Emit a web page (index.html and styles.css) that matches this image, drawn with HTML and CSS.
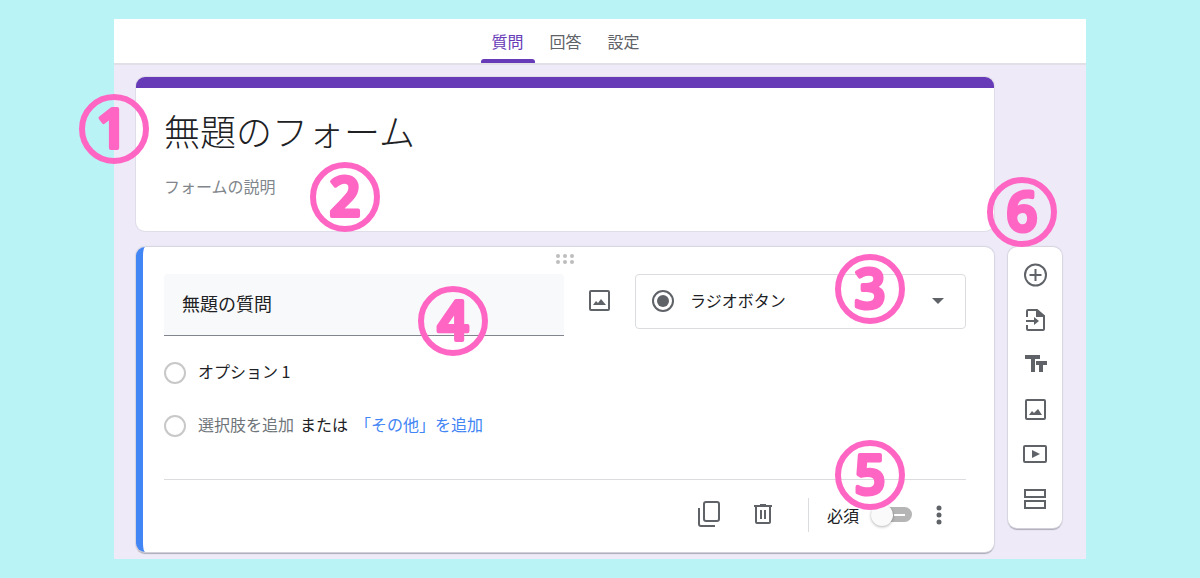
FILE: index.html
```html
<!DOCTYPE html>
<html lang="ja">

<head>
    <title>無題のフォーム</title>
    <meta charset="utf-8">
    <link rel="stylesheet" href="styles.css">
</head>

<body>
    <main class="editor">
        <nav class="tabs">
            <a class="tab active" href="#questions">質問</a>
            <a class="tab" href="#responses">回答</a>
            <a class="tab" href="#settings">設定</a>
        </nav>

        <div class="canvas" id="questions">
            <section class="card title-card">
                <input class="form-title" type="text" value="無題のフォーム" aria-label="フォームのタイトル">
                <input class="form-description" type="text" placeholder="フォームの説明" aria-label="フォームの説明">
                <svg class="marker marker-title" viewBox="0 0 72 72">
                    <circle cx="36" cy="36" r="32" />
                    <text x="34" y="55">1</text>
                </svg>
                <svg class="marker marker-description" viewBox="0 0 72 72">
                    <circle cx="36" cy="36" r="32" />
                    <text x="36" y="55">2</text>
                </svg>
            </section>

            <section class="card question-card">
                <div class="handle">
                    <svg width="18" height="10" viewBox="0 0 18 10">
                        <circle cx="2" cy="2" r="2" />
                        <circle cx="9" cy="2" r="2" />
                        <circle cx="16" cy="2" r="2" />
                        <circle cx="2" cy="8" r="2" />
                        <circle cx="9" cy="8" r="2" />
                        <circle cx="16" cy="8" r="2" />
                    </svg>
                </div>

                <div class="question-head">
                    <div class="question-field">
                        <input class="question-text" type="text" value="無題の質問" aria-label="質問">
                        <svg class="marker marker-question" viewBox="0 0 72 72">
                            <circle cx="36" cy="36" r="32" />
                            <text x="36" y="55">4</text>
                        </svg>
                    </div>
                    <button class="icon-button add-image" type="button" aria-label="画像を追加">
                        <svg class="icon" viewBox="0 0 24 24">
                            <rect class="line" x="2" y="2" width="19" height="19" rx="1" />
                            <path d="M5 16l3-4 2 2 3-4 5 6z" />
                        </svg>
                    </button>
                    <div class="type-picker">
                        <svg class="icon type-icon" viewBox="0 0 24 24">
                            <circle class="line" cx="12" cy="12" r="10" />
                            <circle cx="12" cy="12" r="6" />
                        </svg>
                        <select class="type-select" aria-label="質問の形式">
                            <option>ラジオボタン</option>
                        </select>
                        <svg class="type-arrow" width="12" height="6" viewBox="0 0 12 6">
                            <path d="M0 0h12L6 6z" />
                        </svg>
                        <svg class="marker marker-type" viewBox="0 0 72 72">
                            <circle cx="36" cy="36" r="32" />
                            <text x="36" y="55">3</text>
                        </svg>
                    </div>
                </div>

                <div class="options">
                    <div class="option">
                        <input class="radio" type="radio" name="option" id="option-1">
                        <label class="option-text" for="option-1">オプション 1</label>
                    </div>
                    <div class="option">
                        <input class="radio" type="radio" name="option" id="option-add">
                        <label class="option-text muted" for="option-add">選択肢を追加</label>
                        <span class="option-text or">または</span>
                        <a class="option-text add-other" href="#other">「その他」を追加</a>
                    </div>
                </div>

                <div class="card-footer">
                    <button class="icon-button copy" type="button" aria-label="コピーを作成">
                        <svg class="icon icon-large" viewBox="0 0 28 28">
                            <rect class="line" x="9" y="2" width="15" height="19" rx="2" />
                            <path class="line" d="M4 8v16a2 2 0 0 0 2 2h14" />
                        </svg>
                    </button>
                    <button class="icon-button trash" type="button" aria-label="削除">
                        <svg class="icon" viewBox="0 0 24 24">
                            <path class="line" d="M3 4h18M5 4v16a1 1 0 0 0 1 1h12a1 1 0 0 0 1-1V4M10 8v9M14 8v9" />
                            <path d="M9 2h6v2H9z" />
                        </svg>
                    </button>
                    <div class="required">
                        <label for="required">必須</label>
                        <input class="toggle" type="checkbox" role="switch" id="required">
                    </div>
                    <button class="icon-button more" type="button" aria-label="その他のオプション">
                        <svg class="icon" viewBox="0 0 24 24">
                            <circle cx="12" cy="5" r="2.500" />
                            <circle cx="12" cy="12" r="2.500" />
                            <circle cx="12" cy="19" r="2.500" />
                        </svg>
                    </button>
                    <svg class="marker marker-required" viewBox="0 0 72 72">
                        <circle cx="36" cy="36" r="32" />
                        <text x="36" y="55">5</text>
                    </svg>
                </div>
            </section>

            <aside class="toolbar">
                <button class="icon-button" type="button" aria-label="質問を追加">
                    <svg class="icon" viewBox="0 0 24 24">
                        <circle class="line" cx="12.500" cy="12" r="10.500" />
                        <path class="line" d="M12.500 6v12M6.500 12h12" />
                    </svg>
                </button>
                <button class="icon-button" type="button" aria-label="質問をインポート">
                    <svg class="icon" viewBox="0 0 24 24">
                        <path class="line" d="M4 9V3a1 1 0 0 1 1-1h9l7 6v13a1 1 0 0 1-1 1H5a1 1 0 0 1-1-1v-4M3 13h9" />
                        <path d="M13 1l9 7v1h-9zM11 9l5 4-5 4z" />
                    </svg>
                </button>
                <button class="icon-button" type="button" aria-label="タイトルと説明を追加">
                    <svg class="icon" viewBox="0 0 24 24">
                        <path d="M2 2h15v4h-5v13H8V6H2zM13 8h11v4h-4v7h-4v-7h-3z" />
                    </svg>
                </button>
                <button class="icon-button" type="button" aria-label="画像を追加">
                    <svg class="icon" viewBox="0 0 24 24">
                        <rect class="line" x="3" y="2" width="19" height="19" rx="1" />
                        <path d="M6 17l3-4 2 2 4-4 4 6z" />
                    </svg>
                </button>
                <button class="icon-button" type="button" aria-label="動画を追加">
                    <svg class="icon" viewBox="0 0 24 24">
                        <rect class="line" x="1" y="3" width="22" height="16" rx="1" />
                        <path d="M9 7l8 4-8 4z" />
                    </svg>
                </button>
                <button class="icon-button" type="button" aria-label="セクションを追加">
                    <svg class="icon" viewBox="0 0 24 24">
                        <rect class="line" x="2" y="2" width="20" height="7" />
                        <rect class="line" x="2" y="13" width="20" height="7" />
                    </svg>
                </button>
                <svg class="marker marker-toolbar" viewBox="0 0 72 72">
                    <circle cx="36" cy="36" r="32" />
                    <text x="36" y="55">6</text>
                </svg>
            </aside>
        </div>
    </main>
</body>

</html>
```
FILE: styles.css
```css
* {
    box-sizing: border-box;
}

body {
    margin: 0;
    padding: 19px 0;
    background-color: #baf3f6;
    font-family: "Noto Sans CJK JP", sans-serif;
    font-size: 16px;
    line-height: 24px;
    color: #202124;
}

input,
select,
button {
    margin: 0;
    padding: 0;
    border: 0;
    background: none;
    font: inherit;
    color: inherit;
}

a {
    text-decoration: none;
}

.editor {
    width: 81%;
    margin: 0 auto;
    background-color: #eeeaf8;
}

/* tabs */
.tabs {
    display: flex;
    justify-content: center;
    gap: 4px;
    height: 46px;
    padding: 0 91px 0 22px;
    background-color: white;
    border-bottom: 2px solid #e0e0e6;
}

.tab {
    display: flex;
    flex-direction: column;
    justify-content: space-between;
    padding-top: 10px;
    color: #5f6368;
}

.tab::after {
    content: "";
    width: 54px;
    height: 4px;
    border-radius: 3px 3px 0 0;
}

.tab {
    align-items: center;
}

.tab.active {
    color: #673ab7;
}

.tab.active::after {
    background-color: #673ab7;
}

/* form area */
.canvas {
    display: grid;
    grid-template-columns: 1fr 54px;
    gap: 16px 14px;
    padding: 12px 24px 7px 22px;
}

.card {
    position: relative;
    background-color: white;
    border-radius: 9px;
    box-shadow: 0 0 0 1px #dfdde8;
}

.title-card {
    grid-column: 1;
    display: flex;
    flex-direction: column;
    gap: 16px;
    padding: 16px 28px 33px;
    border-top: 11px solid #673ab7;
}

.form-title {
    height: 54px;
    padding-bottom: 2px;
    font-size: 36px;
    font-weight: 300;
    line-height: 52px;
}

.form-description {
    height: 24px;
}

.form-description::placeholder {
    color: #80868b;
}

.question-card {
    grid-column: 1;
    padding: 0 28px 0 21px;
    border-left: 7px solid #4285f4;
}

.question-card,
.toolbar {
    box-shadow: 0 0 1px 1px #d6d4df, 0 2px 1px #a9a7b0;
}

.handle {
    display: flex;
    justify-content: center;
    height: 27px;
    padding-top: 7px;
}

.handle svg {
    fill: #bdbdbd;
}

.question-head {
    display: flex;
    align-items: flex-start;
}

.question-field {
    position: relative;
    flex: 400;
}

.question-text {
    display: block;
    width: 100%;
    height: 62px;
    padding: 0 18px 4px;
    background-color: #f8f9fa;
    border-bottom: 1px solid #80868b;
    border-radius: 4px 4px 0 0;
    font-size: 18px;
}

.add-image {
    width: 71px;
    height: 54px;
}

.type-picker {
    position: relative;
    flex: 331;
}

.type-select {
    display: block;
    width: 100%;
    height: 55px;
    padding: 0 54px 4px;
    border: 1px solid #dadce0;
    border-radius: 4px;
    appearance: none;
}

.type-icon {
    position: absolute;
    left: 16px;
    top: 15px;
}

.type-arrow {
    position: absolute;
    right: 22px;
    top: 24px;
    fill: #5f6368;
}

/* options */
.options {
    padding: 10px 0 27px;
    border-bottom: 1px solid #dadce0;
}

.option {
    display: flex;
    align-items: center;
    height: 53px;
}

.option-text {
    padding-bottom: 4px;
}

.radio {
    width: 22px;
    height: 22px;
    margin-right: 12px;
    border: 2px solid #c8c8c8;
    border-radius: 50%;
    appearance: none;
}

.muted {
    color: #70757a;
}

.or {
    margin: 0 7px 0 6px;
}

.add-other {
    color: #4285f4;
}

/* footer */
.card-footer {
    position: relative;
    display: flex;
    align-items: center;
    justify-content: flex-end;
    height: 72px;
    padding: 0 15px 2px 0;
}

.copy,
.trash {
    padding-bottom: 2px;
}

.trash {
    margin: 0 33px 0 28px;
}

.required {
    display: flex;
    align-items: center;
    gap: 12px;
    height: 34px;
    padding: 0 15px 0 18px;
    border-left: 1px solid #dadce0;
}

.toggle {
    position: relative;
    width: 41px;
    height: 22px;
    appearance: none;
}

.toggle::before {
    content: "";
    position: absolute;
    inset: 3px 0 4px 6px;
    border-radius: 8px;
    background: linear-gradient(white, white) 17px 7px / 11px 2px no-repeat #b5b5b5;
}

.toggle::after {
    content: "";
    position: absolute;
    left: 0;
    width: 22px;
    height: 22px;
    border-radius: 50%;
    background-color: #fafafa;
    box-shadow: 0 1px 3px rgba(0, 0, 0, 0.3);
}

/* side toolbar */
.toolbar {
    position: relative;
    grid-column: 2;
    grid-row: 2;
    align-self: start;
    display: flex;
    flex-direction: column;
    gap: 1px;
    padding: 6px 0;
    background-color: white;
    border-radius: 9px;
}

.toolbar .icon-button {
    height: 44px;
}

.icon-button {
    display: flex;
    align-items: center;
    justify-content: center;
}

.icon {
    width: 24px;
    height: 24px;
    fill: #5f6368;
}

.icon-large {
    width: 28px;
    height: 28px;
}

.line {
    fill: none;
    stroke: #5f6368;
    stroke-width: 2;
}

/* numbered markers */
.marker {
    position: absolute;
    z-index: 1;
    width: 72px;
    height: 72px;
    overflow: visible;
    pointer-events: none;
}

.marker circle {
    fill: none;
    stroke: #ff66c4;
    stroke-width: 6;
}

.marker text {
    fill: #ff66c4;
    stroke: #ff66c4;
    stroke-width: 4;
    stroke-linejoin: round;
    font-family: "Open Sans", sans-serif;
    font-size: 54px;
    font-weight: 600;
    text-anchor: middle;
}

.marker-title {
    left: -58px;
    top: 5px;
}

.marker-description {
    left: 173px;
    top: 73px;
}

.marker-type {
    right: 60px;
    top: -21px;
}

.marker-question {
    right: 75px;
    top: 11px;
}

.marker-required {
    right: 60px;
    top: -41px;
}

.marker-toolbar {
    left: -22px;
    top: -71px;
}
```
